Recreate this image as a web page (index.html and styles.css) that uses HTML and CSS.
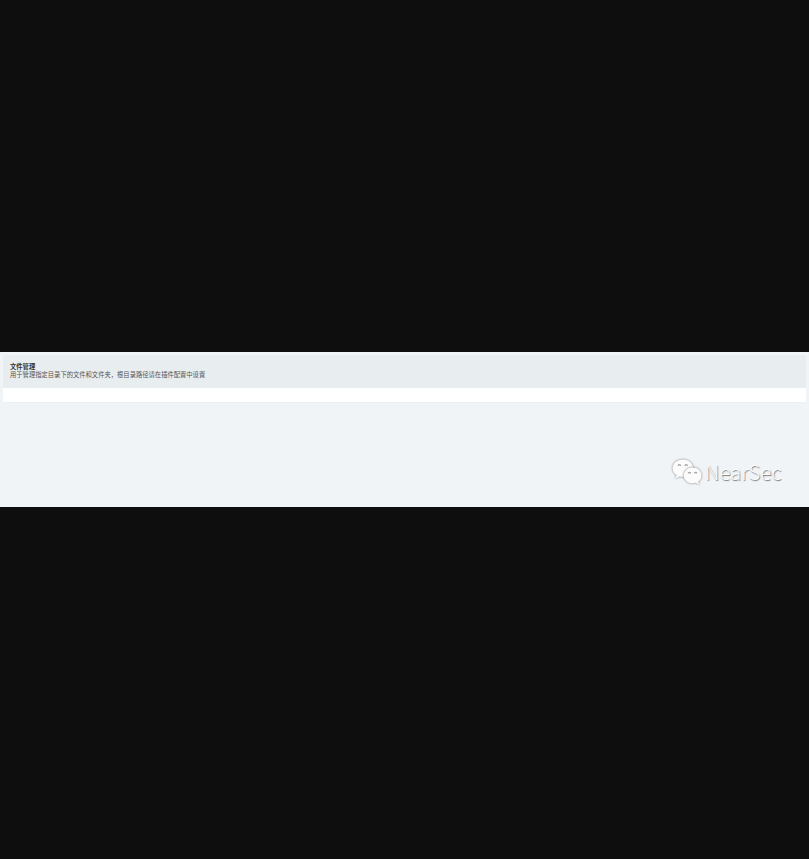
FILE: index.html
```html
<!DOCTYPE html>
<html lang="zh-CN">
<head>
<meta charset="utf-8">
<title>文件管理</title>
<link rel="stylesheet" href="styles.css">
</head>
<body>
<main class="page">
  <section class="panel">
    <header class="panel-heading">
      <h1 class="panel-title">文件管理</h1>
      <p class="panel-lead">用于管理指定目录下的文件和文件夹，根目录路径请在插件配置中设置</p>
    </header>
    <div class="panel-body"></div>
  </section>
  <div class="brand">
    <svg class="brand-icon" viewBox="0 0 32 28" width="32" height="28">
      <g class="bubble">
        <path d="M10.9.4C5.1.4.6 4.3.6 9.2c0 2.8 1.5 5.3 4 6.9l-1.2 3.4 4.1-2c1.1.3 2.2.4 3.4.4 5.7 0 10.3-3.9 10.3-8.7S16.600.4 10.9.4z"/>
      </g>
      <g class="bubble">
        <path d="M20.6 8.600c-4.900 0-8.900 3.500-8.900 7.800s4 7.800 8.900 7.800c1.100 0 2.100-.2 3.100-.5l3.700 2-1.200-3.200c2.100-1.400 3.300-3.600 3.300-6.100 0-4.300-4-7.800-8.900-7.800z"/>
      </g>
      <path class="eyes" d="M6 6.800q1.400-2.200 2.800 0M12.800 6.800q1.400-2.200 2.800 0M16.200 14.400q1.300-2 2.600 0M22.300 14.400q1.300-2 2.600 0"/>
    </svg>
    <span class="brand-name">NearSec</span>
  </div>
</main>
</body>
</html>
```

FILE: styles.css
```css
* {
  box-sizing: border-box;
}

body {
  margin: 0;
  height: 859px;
  padding-top: 352px;
  background: #0e0e0e;
  font-family: "Noto Sans CJK SC", sans-serif;
  overflow: hidden;
}

.page {
  height: 155px;
  padding: 3px 3px 0;
  background: #f0f4f7;
}

.panel {
  height: 47px;
  border-radius: 1px;
  background: #fff;
  box-shadow: 0 1px 1px rgba(0, 0, 0, 0.02);
  overflow: hidden;
}

.panel-heading {
  height: 33px;
  padding: 7px 7px 0;
  background: #e8edf0;
}

.panel-title,
.panel-lead {
  margin: 0;
  font-size: 6.3px;
  line-height: 9px;
  white-space: nowrap;
}

.panel-title {
  color: #333;
  font-weight: 700;
}

.panel-lead {
  margin-top: -1px;
  color: #555;
  font-weight: 400;
}

.brand {
  display: flex;
  align-items: center;
  gap: 1px;
  height: 30px;
  margin: 54px 0 0 669px;
}

.brand-icon {
  flex: none;
  margin-top: 3px;
  overflow: visible;
}

.bubble {
  fill: #fcfcfc;
  filter: drop-shadow(0.3px 0.7px 0.8px rgba(0, 0, 0, 0.5));
}

.eyes {
  fill: none;
  stroke: #a3a5a6;
  stroke-width: 1.3;
}

.brand-name {
  color: #fcfcfc;
  font-size: 20.4px;
  font-weight: 300;
  line-height: 30px;
  text-shadow: 0.8px 0.8px 1px rgba(0, 0, 0, 0.5);
}
```
